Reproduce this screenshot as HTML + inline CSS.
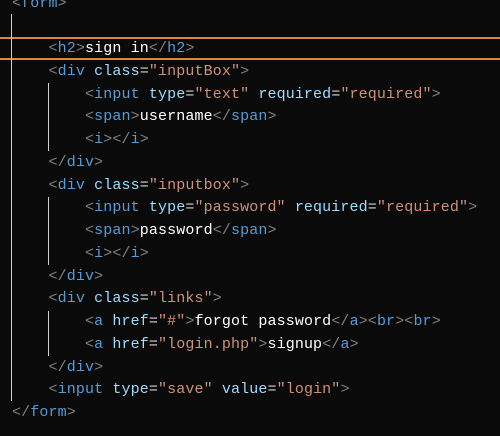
<!DOCTYPE html>
<html><head><meta charset="utf-8"><style>
html,body{margin:0;padding:0;background:#0a0a0a;width:500px;height:436px;overflow:hidden}
#c{position:absolute;left:12px;top:-7.5px;font-family:"Liberation Mono",monospace;font-size:15px;line-height:22.75px;color:#d4d4d4;white-space:pre;letter-spacing:0.12px}
.b{color:#808080}.t{color:#569cd6}.a{color:#9cdcfe}.s{color:#ce9178}.x{color:#ffffff}
.g{position:absolute;width:1px;background:#d0d0d0}
.h{position:absolute;left:0;width:500px;height:2px;background:#d9893f}
</style></head><body>
<div class="h" style="top:37px"></div>
<div class="h" style="top:58px"></div>
<div class="g" style="left:11px;top:14px;height:387px"></div>
<div class="g" style="left:48px;top:83px;height:68px"></div>
<div class="g" style="left:48px;top:197px;height:68px"></div>
<div class="g" style="left:48px;top:311px;height:45px"></div>
<div id="c"><span class="b">&lt;</span><span class="t">form</span><span class="b">&gt;</span>

    <span class="b">&lt;</span><span class="t">h2</span><span class="b">&gt;</span><span class="x">sign in</span><span class="b">&lt;/</span><span class="t">h2</span><span class="b">&gt;</span>
    <span class="b">&lt;</span><span class="t">div</span> <span class="a">class</span>=<span class="s">"inputBox"</span><span class="b">&gt;</span>
        <span class="b">&lt;</span><span class="t">input</span> <span class="a">type</span>=<span class="s">"text"</span> <span class="a">required</span>=<span class="s">"required"</span><span class="b">&gt;</span>
        <span class="b">&lt;</span><span class="t">span</span><span class="b">&gt;</span><span class="x">username</span><span class="b">&lt;/</span><span class="t">span</span><span class="b">&gt;</span>
        <span class="b">&lt;</span><span class="t">i</span><span class="b">&gt;&lt;/</span><span class="t">i</span><span class="b">&gt;</span>
    <span class="b">&lt;/</span><span class="t">div</span><span class="b">&gt;</span>
    <span class="b">&lt;</span><span class="t">div</span> <span class="a">class</span>=<span class="s">"inputbox"</span><span class="b">&gt;</span>
        <span class="b">&lt;</span><span class="t">input</span> <span class="a">type</span>=<span class="s">"password"</span> <span class="a">required</span>=<span class="s">"required"</span><span class="b">&gt;</span>
        <span class="b">&lt;</span><span class="t">span</span><span class="b">&gt;</span><span class="x">password</span><span class="b">&lt;/</span><span class="t">span</span><span class="b">&gt;</span>
        <span class="b">&lt;</span><span class="t">i</span><span class="b">&gt;&lt;/</span><span class="t">i</span><span class="b">&gt;</span>
    <span class="b">&lt;/</span><span class="t">div</span><span class="b">&gt;</span>
    <span class="b">&lt;</span><span class="t">div</span> <span class="a">class</span>=<span class="s">"links"</span><span class="b">&gt;</span>
        <span class="b">&lt;</span><span class="t">a</span> <span class="a">href</span>=<span class="s">"#"</span><span class="b">&gt;</span><span class="x">forgot password</span><span class="b">&lt;/</span><span class="t">a</span><span class="b">&gt;&lt;</span><span class="t">br</span><span class="b">&gt;&lt;</span><span class="t">br</span><span class="b">&gt;</span>
        <span class="b">&lt;</span><span class="t">a</span> <span class="a">href</span>=<span class="s">"login.php"</span><span class="b">&gt;</span><span class="x">signup</span><span class="b">&lt;/</span><span class="t">a</span><span class="b">&gt;</span>
    <span class="b">&lt;/</span><span class="t">div</span><span class="b">&gt;</span>
    <span class="b">&lt;</span><span class="t">input</span> <span class="a">type</span>=<span class="s">"save"</span> <span class="a">value</span>=<span class="s">"login"</span><span class="b">&gt;</span>
<span class="b">&lt;/</span><span class="t">form</span><span class="b">&gt;</span></div>
</body></html>
